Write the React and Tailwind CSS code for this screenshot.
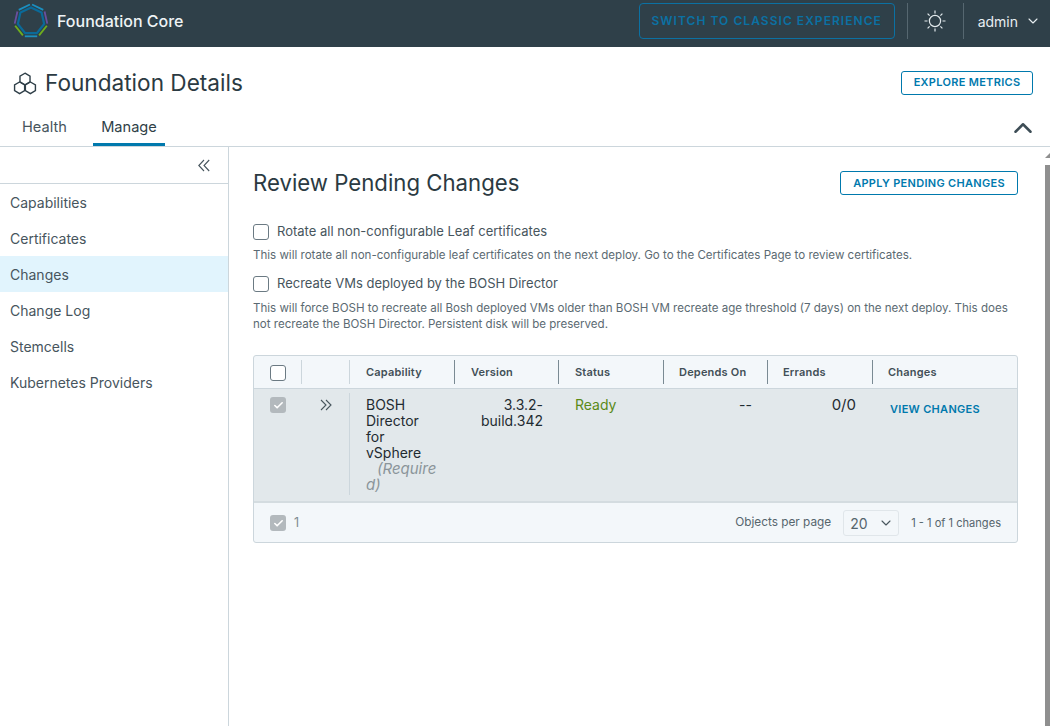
import React from "react";
import { ChevronDown, ChevronUp, Check } from "lucide-react";

const F = "font-['Inter','Liberation_Sans',sans-serif]";

function Logo() {
  const pts = [];
  const inner = [];
  for (let i = 0; i < 7; i++) {
    const a = -Math.PI / 2 + (i * 2 * Math.PI) / 7;
    pts.push([18 + 17 * Math.cos(a), 19 + 17 * Math.sin(a)]);
    inner.push(`${18 + 13.5 * Math.cos(a)},${19 + 13.5 * Math.sin(a)}`);
  }
  const order = [
    [0, 1, "#1b8fc0"],
    [1, 2, "#6a4fa0"],
    [2, 3, "#6fae1e"],
    [3, 4, "#1b8fc0"],
    [4, 5, "#6fae1e"],
    [5, 6, "#6a4fa0"],
    [6, 0, "#1b8fc0"],
  ];
  return (
    <svg width="36" height="38" viewBox="0 0 36 38" fill="none" className="shrink-0">
      <polygon points={inner.join(" ")} stroke="#0a6a99" strokeWidth="2.2" />
      {order.map(([a, b, c], i) => {
        const [x1, y1] = pts[a];
        const [x2, y2] = pts[b];
        const t = 0.08;
        return (
          <line
            key={i}
            x1={x1 + (x2 - x1) * t}
            y1={y1 + (y2 - y1) * t}
            x2={x2 - (x2 - x1) * t}
            y2={y2 - (y2 - y1) * t}
            stroke={c}
            strokeWidth="1.8"
          />
        );
      })}
    </svg>
  );
}

function Sun() {
  return (
    <svg width="24" height="24" viewBox="0 0 24 24" fill="none" stroke="#e3eaed" strokeWidth="1.2">
      <circle cx="12" cy="12" r="5.6" />
      <path d="M12 1.5v3M12 19.5v3M1.5 12h3M19.5 12h3M4.6 4.6l2 2M17.4 17.4l2 2M4.6 19.4l2-2M17.4 6.6l2-2" />
    </svg>
  );
}

function Hexes() {
  const hex = (cx, cy) => {
    const r = 5.8;
    const p = [];
    for (let i = 0; i < 6; i++) {
      const a = -Math.PI / 2 + (i * Math.PI) / 3;
      p.push(`${cx + r * Math.cos(a)},${cy + r * Math.sin(a)}`);
    }
    return p.join(" ");
  };
  return (
    <svg width="24" height="24" viewBox="0 0 24 24" fill="none" stroke="#2f3f48" strokeWidth="1.4">
      <polygon points={hex(12, 8)} />
      <polygon points={hex(6.6, 16.8)} />
      <polygon points={hex(17.4, 16.8)} />
    </svg>
  );
}

function DoubleLeft() {
  return (
    <svg width="12" height="13" viewBox="0 0 12 13" fill="none" stroke="#47555d" strokeWidth="1.1">
      <path d="M6 1 L0.8 6.5 L6 12" />
      <path d="M11.2 1 L6 6.5 L11.2 12" />
    </svg>
  );
}

function DoubleRight() {
  return (
    <svg width="12" height="12" viewBox="0 0 12 12" fill="none" stroke="#47555d" strokeWidth="1.1">
      <path d="M1 1 L6 6 L1 11" />
      <path d="M6 1 L11 6 L6 11" />
    </svg>
  );
}

function Box({ className = "" }) {
  return <span className={`block w-4 h-4 rounded-[3px] border border-[#6b7a83] bg-white ${className}`} />;
}

function CheckedBox() {
  return (
    <span className="flex w-4 h-4 items-center justify-center rounded-[3px] bg-[#b3b9bd]">
      <Check size={11} strokeWidth={3.5} className="text-white" />
    </span>
  );
}

function Side({ children, active }) {
  return (
    <div className={`h-9 pl-[10px] flex items-center text-[14px] text-[#47555d] ${active ? "bg-[#e1f4fd]" : ""}`}>
      {children}
    </div>
  );
}

function Th({ w, children, strong, pl = "pl-[17px]" }) {
  return (
    <div className={`relative h-full flex items-center ${pl} ${w} text-[11px] font-semibold text-[#424f57] tracking-[0.2px]`}>
      <span className={`absolute left-0 top-[3px] bottom-[4px] w-px ${strong ? "bg-[#7a8a93]" : "bg-[#ccd6dc]"}`} />
      {children}
    </div>
  );
}

export default function App() {
  return (
    <div className={`${F} relative w-[1050px] h-[726px] overflow-hidden bg-white flex flex-col`}>
      <header className="h-[47px] shrink-0 bg-[#2f4049] flex items-center pl-[13px] pr-[9px] pb-[5px]">
        <Logo />
        <span className="ml-2 text-[16px] font-medium text-[#eef3f5]">Foundation Core</span>
        <div className="flex-1" />
        <button className="h-[36px] w-[256px] rounded-[4px] border border-[#0b71a3] text-[#0b71a3] text-[12px] font-semibold tracking-[1.05px] flex items-center justify-center">
          SWITCH TO CLASSIC EXPERIENCE
        </button>
        <span className="ml-3 w-px h-9 bg-[#566770]" />
        <span className="w-[55px] flex justify-center"><Sun /></span>
        <span className="w-px h-9 bg-[#566770]" />
        <span className="ml-[14px] text-[14px] text-[#e8eef1]">admin</span>
        <ChevronDown size={16} strokeWidth={1.6} className="ml-[7px] text-[#e8eef1]" />
      </header>

      <div className="h-[100px] shrink-0 flex flex-col border-b border-[#ccd6dc]">
        <div className="flex items-center pl-[13px] pr-[17px] pt-[10px] h-[62px]">
          <Hexes />
          <h1 className="ml-[8px] text-[22.6px] font-normal text-[#2b3a42]">Foundation Details</h1>
          <div className="flex-1" />
          <button className="h-6 w-[132px] rounded-[3px] border border-[#0079ad] text-[#0079ad] text-[11px] font-semibold tracking-[0.3px]">
            EXPLORE METRICS
          </button>
        </div>
        <div className="flex-1 flex items-end pl-[14px] pr-[17px]">
          <div className="h-[38px] w-[79px] flex items-center pl-2 pt-[1px] text-[14.6px] text-[#47555d]">Health</div>
          <div className="h-[38px] w-[72px] flex items-center justify-center pt-[4px] text-[14.6px] text-[#2f3f48] border-b-[3px] border-[#0079ad]">Manage</div>
          <div className="flex-1" />
          <ChevronUp size={30} strokeWidth={2} className="mb-[3px] -mr-[5px] text-[#3d4d56]" />
        </div>
      </div>

      <div className="flex-1 flex min-h-0">
        <aside className="w-[229px] shrink-0 border-r border-[#ccd6dc]">
          <div className="h-[37px] border-b border-[#ccd6dc] flex items-center justify-end pr-[18px]">
            <DoubleLeft />
          </div>
          <div>
            <Side>Capabilities</Side>
            <Side>Certificates</Side>
            <Side active>Changes</Side>
            <Side>Change Log</Side>
            <Side>Stemcells</Side>
            <Side>Kubernetes Providers</Side>
          </div>
        </aside>

        <main className="flex-1 pl-6 pr-8 pt-[24px]">
          <div className="flex items-center justify-between h-6">
            <h2 className="text-[22.2px] font-normal text-[#2b3a42]">Review Pending Changes</h2>
            <button className="h-6 w-[178px] rounded-[3px] border border-[#0079ad] text-[#0079ad] text-[11px] font-semibold tracking-[0.3px]">
              APPLY PENDING CHANGES
            </button>
          </div>

          <label className="mt-[29px] flex items-center h-4 gap-2 text-[13px] text-[#47555d]">
            <Box /> Rotate all non-configurable Leaf certificates
          </label>
          <p className="mt-[7px] text-[11.55px] leading-4 text-[#5b6a72]">
            This will rotate all non-configurable leaf certificates on the next deploy. Go to the Certificates Page to review certificates.
          </p>
          <label className="mt-[13px] flex items-center h-4 gap-2 text-[13px] text-[#47555d]">
            <Box /> Recreate VMs deployed by the BOSH Director
          </label>
          <p className="mt-[8px] text-[11.55px] leading-4 text-[#5b6a72]">
            This will force BOSH to recreate all Bosh deployed VMs older than BOSH VM recreate age threshold (7 days) on the next deploy. This does not recreate the BOSH Director. Persistent disk will be preserved.
          </p>

          <div className="mt-[23px] rounded-[3px] border border-[#ccd6dc] bg-[#f3f7fa]">
            <div className="h-[33px] flex items-center pt-[1px] border-b border-[#ccd6dc]">
              <div className="w-[47px] flex justify-center pl-[1px]"><Box /></div>
              <Th w="w-[48px]" />
              <Th w="w-[105px]">Capability</Th>
              <Th w="w-[104px]" strong>Version</Th>
              <Th w="w-[105px]" strong>Status</Th>
              <Th w="w-[104px]" strong pl="pl-4">Depends On</Th>
              <Th w="w-[105px]" strong pl="pl-4">Errands</Th>
              <Th w="flex-1" strong pl="pl-4">Changes</Th>
            </div>
            <div className="h-[114px] bg-[#e2e8eb] border-b-[2px] border-[#d4dce0] flex text-[14px] leading-4 text-[#1f2b31]">
              <div className="w-[47px] pt-2 flex justify-center pl-[1px]"><CheckedBox /></div>
              <div className="w-[48px] pt-[10px] pl-[19px]">
                <DoubleRight />
              </div>
              <div className="relative w-[105px] pl-[17px] pr-[15px] pt-2 break-words">
                <span className="absolute left-0 top-1 bottom-[6px] w-px bg-[#ccd6dc]" />
                BOSH Director for vSphere <i className="text-[15px] text-[#8b959a] pl-[11px]">(Required)</i>
              </div>
              <div className="w-[104px] pt-2 pr-[15px] text-right">3.3.2-build.342</div>
              <div className="w-[105px] pt-2 pl-[17px] text-[#5a8a18]">Ready</div>
              <div className="w-[104px] pt-2 pr-[15px] text-right">--</div>
              <div className="w-[105px] pt-2 pr-4 text-right text-[15px]">0/0</div>
              <div className="flex-1 pt-[13px] pl-[18px] text-[11px] leading-[14px] font-semibold text-[#0079ad] tracking-[0.3px]">VIEW CHANGES</div>
            </div>
            <div className="h-[39px] flex items-center pl-4 pr-4 pt-[1px] text-[11.1px] text-[#56656d]">
              <CheckedBox />
              <span className="ml-2 text-[12.5px] text-[#7d8a91]">1</span>
              <div className="flex-1" />
              <span className="text-[11.8px]">Objects per page</span>
              <span className="ml-[12px] w-[56px] h-[26px] rounded-[3px] border border-[#e0e6ea] flex items-center justify-between pl-[6px] pr-[4px] text-[14px]">
                20 <ChevronDown size={16} strokeWidth={1.6} className="text-[#47555d]" />
              </span>
              <span className="ml-[12px]">1 - 1 of 1 changes</span>
            </div>
          </div>
        </main>
      </div>

      <svg width="5" height="5" viewBox="0 0 5 5" className="absolute right-0 top-[153px]">
        <polygon points="5,0 5,5 0,5" fill="#8f8f8f" />
      </svg>
      <div className="absolute right-0 top-[165px] bottom-0 w-[5px] bg-[#8f8f8f]" />
    </div>
  );
}
